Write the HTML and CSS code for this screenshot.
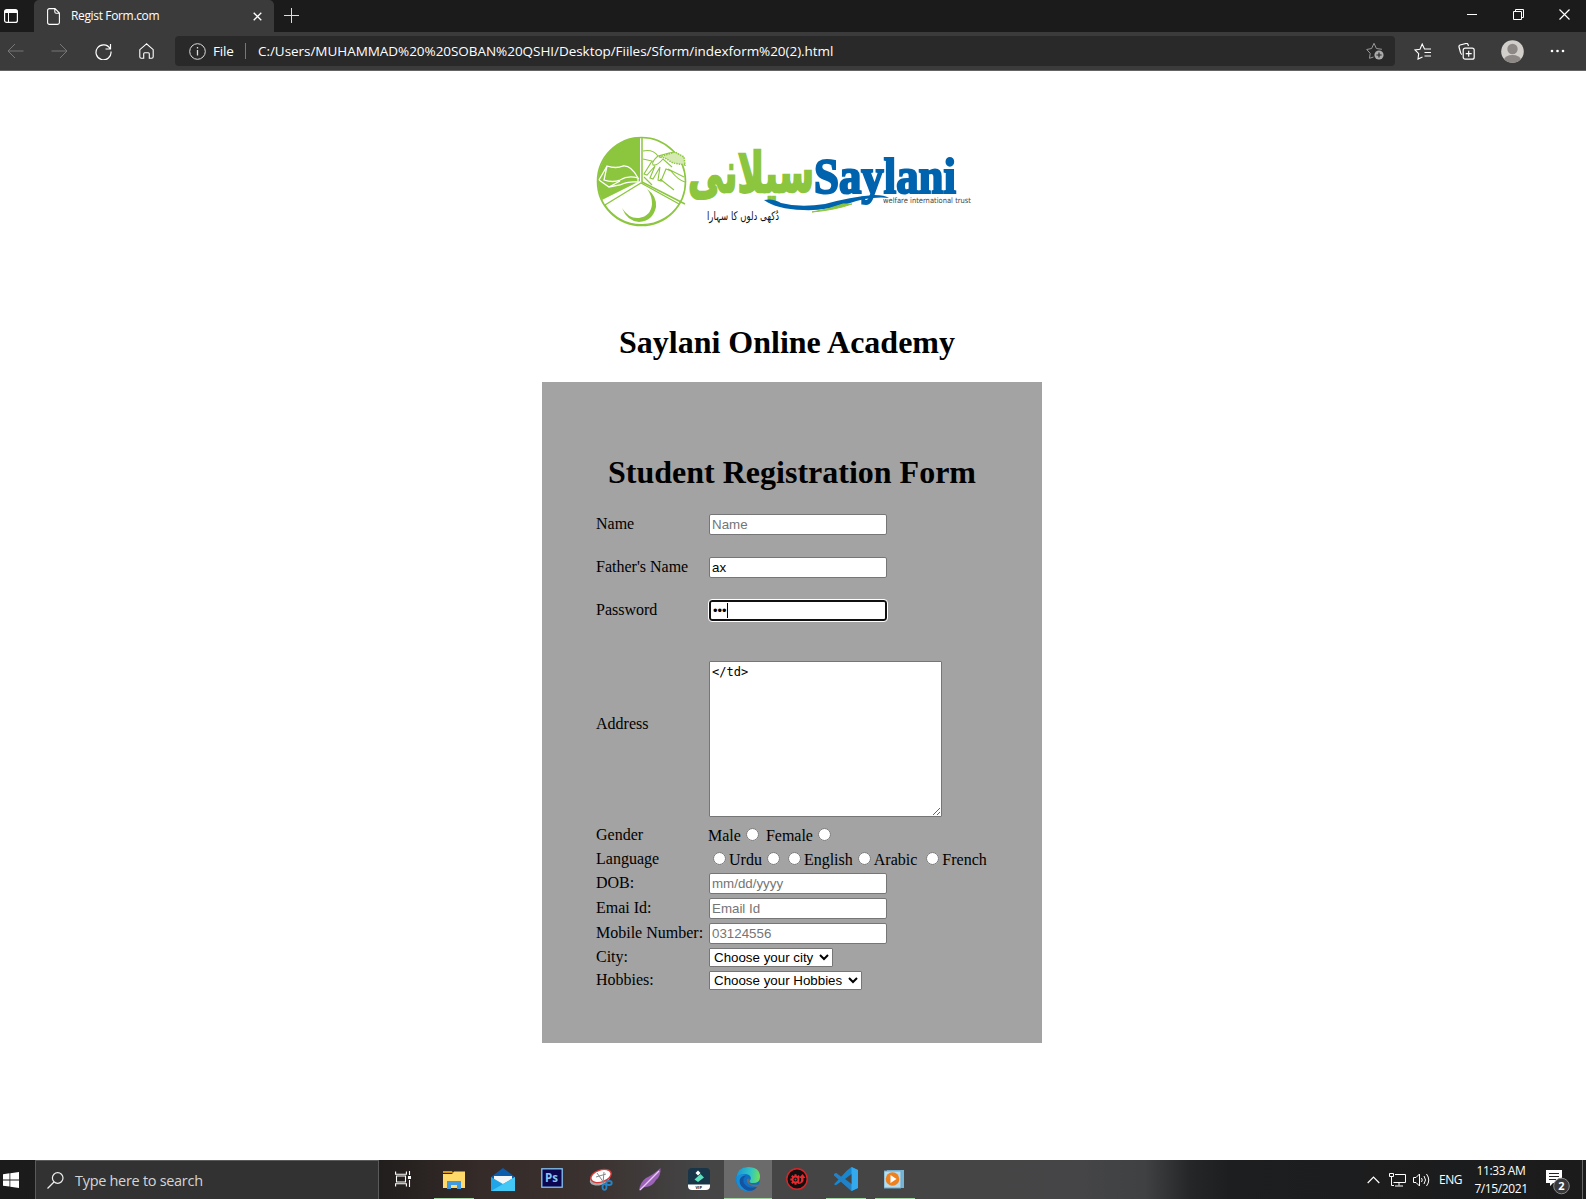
FILE: index.html
```html
<!DOCTYPE html>
<html lang="en">
<head>
<meta charset="utf-8">
<title>Regist Form.com</title>
<link rel="stylesheet" href="styles.css">
</head>
<body>
<div class="screen">
  <header class="tabs">
    <div class="tab-menu"><svg width="14" height="14" viewBox="0 0 14 14" fill="none" stroke="#fff"><rect x=".6" y=".6" width="12.8" height="12.8" rx="2" stroke-width="1.2"/><path d="M1 2.5h12" stroke-width="3"/><path d="M4.5 4v9"/></svg></div>
    <div class="tab">
      <svg width="13" height="17" viewBox="0 0 13 17" fill="none" stroke="#fff" stroke-width="1.1"><path d="M2.500 .6H8l4.400 4.400v9.500q0 1.900-1.900 1.900h-8Q.6 16.400.6 14.500v-12Q.6.6 2.500.6zM7.800.8v3q0 1.400 1.400 1.400h3"/></svg>
      <span class="tab-title">Regist Form.com</span>
      <svg width="9" height="9" viewBox="0 0 9 9" stroke="#fff" stroke-width="1.3"><path d="M.7.7l7.600 7.600M8.300.7L.7 8.300"/></svg>
    </div>
    <svg class="tab-add" width="15" height="15" viewBox="0 0 15 15" stroke="#ddd"><path d="M7.500 0v15M0 7.500h15"/></svg>
    <div class="window-buttons">
      <svg width="11" height="11" viewBox="0 0 11 11" stroke="#fff"><path d="M0 5.500h10"/></svg>
      <svg width="11" height="11" viewBox="0 0 11 11" fill="none" stroke="#fff"><path d="M.5 2.500h8v8h-8zM2.500 2.500v-2h8v8h-2"/></svg>
      <svg width="11" height="11" viewBox="0 0 11 11" stroke="#fff" stroke-width="1.2"><path d="M.5.5l10 10M10.500.5l-10 10"/></svg>
    </div>
  </header>
  <nav class="toolbar">
    <div class="nav-buttons">
      <svg width="17" height="16" viewBox="0 0 17 16" fill="none" stroke="#777"><path d="M16.500 8H1M8 1L1 8l7 7"/></svg>
      <svg width="17" height="16" viewBox="0 0 17 16" fill="none" stroke="#777"><path d="M.5 8H16M9 1l7 7-7 7"/></svg>
      <svg width="17" height="17" viewBox="0 0 17 17" fill="none" stroke="#fff" stroke-width="1.2"><path d="M15 5.500A7.500 7.500 0 1 0 16 8.500M15.500 1v5h-5"/></svg>
      <svg width="15" height="16" viewBox="0 0 15 16" fill="none" stroke="#fff" stroke-width="1.1"><path d="M7.500.8L.8 6.700v7q0 1.500 1.500 1.500h2.400v-4.400q0-1 1-1h3.600q1 0 1 1v4.400h2.400q1.500 0 1.500-1.500v-7z"/></svg>
    </div>
    <div class="address">
      <svg width="17" height="17" viewBox="0 0 17 17" fill="none" stroke="#ddd"><circle cx="8.500" cy="8.500" r="7.800"/><path d="M8.500 7v5.500M8.500 4v1.500" stroke-width="1.300"/></svg>
      <span class="scheme">File</span>
      <span class="url">C:/Users/MUHAMMAD%20%20SOBAN%20QSHI/Desktop/Fiiles/Sform/indexform%20(2).html</span>
      <svg class="star-add" width="18" height="18" viewBox="0 0 18 18" fill="none" stroke="#999"><path d="M7.500 15L3.500 16.300l.7-5L.7 7.500 5.600 6.500 8 1.300l2.400 5.200 5.500.8"/><circle cx="13" cy="13" r="4.600" fill="#aaa" stroke="none"/><path d="M13 10.400v5.200M10.400 13h5.200" stroke="#292929" stroke-width="1.200"/></svg>
    </div>
    <div class="tools">
      <svg width="18" height="17" viewBox="0 0 18 17" fill="none" stroke="#fff" stroke-width="1.100"><path d="M8.500 14L4 16l.7-5.400L1 7l5-.8L8.200 1l2.300 5h6.500M10.500 9.500H17M10.500 13H17"/></svg>
      <svg width="17" height="17" viewBox="0 0 17 17" fill="none" stroke="#fff" stroke-width="1.200"><path d="M4 11.500Q2.800 11 2.500 9.500L1 4Q.7 2.500 2 2l6-1.500q1.500-.3 2 1l.5 1.500"/><rect x="5.200" y="5.200" width="11" height="11" rx="2"/><path d="M10.700 7.700v6M7.700 10.700h6"/></svg>
      <svg width="23" height="23" viewBox="0 0 23 23"><defs><clipPath id="avatar"><circle cx="11.500" cy="11.500" r="11.300"/></clipPath></defs><g clip-path="url(#avatar)"><path fill="#d2cfcb" d="M0 0h23v23H0z"/><circle cx="11.500" cy="9" r="5.200" fill="#8d8885"/><ellipse cx="11.500" cy="20" rx="8.500" ry="5" fill="#8d8885"/></g></svg>
      <svg width="15" height="4" viewBox="0 0 15 4" fill="#fff"><circle cx="2" cy="2" r="1.300"/><circle cx="7.500" cy="2" r="1.300"/><circle cx="13" cy="2" r="1.300"/></svg>
    </div>
  </nav>

  <main class="page">
    <svg class="logo" width="400" height="110" viewBox="0 0 400 110">
      <circle cx="56.500" cy="56.500" r="44" fill="#fff" stroke="#8cc63f" stroke-width="1.600"/>
      <path d="M55 12A44.500 44.500 0 0 0 17 75L55 56z" fill="#8cc63f"/>
      <path d="M20 80A44 44 0 0 0 94 79L56 58z" fill="#fff" stroke="#8cc63f" stroke-width="1.200"/>
      <path d="M57 12v45l43 22" fill="none" stroke="#8cc63f" stroke-width="1.500"/>
      <path d="M62 64Q72 71 71 82 68 96 54 97 42 96 37 83 44 94 54 93 66 91 67 79 67 70 62 64z" fill="#8cc63f"/>
      <path d="M22 41q9 3 16 0 8-1 15 12-10-3-18 2-7 3-16 0zM14 55l8-14M14 55l10 7 11-2q8-4 18-3v-4M24 62l11-6" fill="none" stroke="#fff" stroke-width="1.300"/>
      <path d="M58 26q10-2 15 5l11-3q9-2 14 6M58 34l9 2-8 13 3 1 8-9-5 12 3 1 7-12-2 13 3 1 5-12 5 2q7 9 14 11M73 31q-7 6-5 9 4 1 10-6l9 8M59 52l8 8M75 54l14 11M83 44l16 8" fill="none" stroke="#8cc63f" stroke-width="1.100"/>
      <path d="M74 32l16-5 9 5 1 8-12-2-8-5z" fill="#d5e9b2" stroke="#8cc63f" stroke-width="1.500" stroke-dasharray="1.500 1"/>
      <g transform="translate(0 67) scale(1 1.150)"><text class="logo-urdu" x="229" y="0" textLength="126" lengthAdjust="spacingAndGlyphs" direction="rtl">سیلانی</text></g>
      <path d="M179 75Q188 73 196 78 215 83 240 79 265 72 289 70 300 70 304 73 285 71 262 79 240 86 218 85 191 84 179 75z" fill="#0063ae"/>
      <path d="M227 87Q250 85 267 79H258Q245 84 227 87z" fill="#8cc63f" stroke="#8cc63f"/>
      <g transform="translate(0 68) scale(1 1.120)"><text class="logo-name" x="229" y="0" textLength="142" lengthAdjust="spacingAndGlyphs">Saylani</text></g>
      <text class="logo-trust" x="298" y="78" textLength="88" lengthAdjust="spacingAndGlyphs">welfare international trust</text>
      <text class="logo-tagline" x="194" y="95" textLength="72" lengthAdjust="spacingAndGlyphs" direction="rtl">دُکھی دلوں کا سہارا</text>
    </svg>
    <h1 class="academy">Saylani Online Academy</h1>
    <form class="form">
      <h1 class="form-title">Student Registration Form</h1>
      <div class="row tall"><label>Name</label><input class="field" type="text" placeholder="Name"></div>
      <div class="row tall"><label>Father's Name</label><input class="field" type="text" value="ax"></div>
      <div class="row tall"><label>Password</label><div class="field focused"><span>•••</span><i class="caret"></i></div></div>
      <div class="row area-row"><label>Address</label><textarea class="area">&lt;/td&gt;</textarea></div>
      <div class="row choice"><label>Gender</label><div class="radios">Male<input type="radio"> Female<input type="radio"></div></div>
      <div class="row choice"><label>Language</label><div class="radios"><input type="radio">Urdu<input type="radio"><input type="radio">English<input type="radio">Arabic <input type="radio">French</div></div>
      <div class="row"><label>DOB:</label><input class="field" type="text" placeholder="mm/dd/yyyy"></div>
      <div class="row"><label>Emai Id:</label><input class="field" type="text" placeholder="Email Id"></div>
      <div class="row"><label>Mobile Number:</label><input class="field" type="text" placeholder="03124556"></div>
      <div class="row short"><label>City:</label><select class="select city"><option>Choose your city</option></select></div>
      <div class="row short"><label>Hobbies:</label><select class="select hobbies"><option>Choose your Hobbies</option></select></div>
    </form>
  </main>

  <footer class="taskbar">
    <div class="start"><svg width="16" height="16" viewBox="0 0 16 16" fill="#fff"><path d="M0 2.200l6.500-.9v6.200H0zM7.300 1.200L16 0v7.500H7.300zM0 8.400h6.500v6.200L0 13.800zM7.300 8.400H16V16l-8.700-1.200z"/></svg></div>
    <div class="search"><svg width="17" height="17" viewBox="0 0 17 17" fill="none" stroke="#eee" stroke-width="1.200"><circle cx="10.700" cy="6" r="5.300"/><path d="M7 10L.5 16.500"/></svg><span>Type here to search</span></div>
    <div class="apps">
      <div class="app task-view"><svg width="17" height="16" viewBox="0 0 17 16" fill="none" stroke="#fff" stroke-width="1.100"><path d="M.6.500v2.700h10.800V.500M1.500 5h9v6h-9zM.6 15.500v-2.700h10.800v2.700M14.500 0v4M14.500 9v7"/><path fill="#fff" stroke="none" d="M13 5h3v3h-3z"/></svg></div>
      <div class="app open"><svg width="22" height="19" viewBox="0 0 22 19"><path fill="#d99a10" d="M0 1h9l1 2H0z"/><path fill="#ffda6b" d="M0 4h9l2-2.500h11V18H0z"/><path fill="#3f9ae0" d="M4 11h14v8h-4v-4H8v4H4z"/></svg></div>
      <div class="app"><svg width="24" height="23" viewBox="0 0 24 23"><path fill="#0b5cad" d="M0 9L12 0l12 9v5H0z"/><path fill="#f3f5f7" d="M3 8h18v5l-9 6-9-6z"/><path fill="#20a5e8" d="M0 9l12 7L24 9v14H0z"/><path fill="#43c7f4" d="M0 23L24 9v14z"/></svg></div>
      <div class="app"><svg class="ps" width="22" height="20" viewBox="0 0 22 20"><rect x=".8" y=".8" width="20.400" height="18.400" fill="#0c0650" stroke="#86c5f4" stroke-width="1.300"/><text class="ps-text" x="4" y="14">Ps</text></svg></div>
      <div class="app"><svg width="24" height="23" viewBox="0 0 24 23"><ellipse cx="11" cy="11" rx="10.500" ry="6" fill="#aaa" transform="rotate(-18 11 11)"/><ellipse cx="12" cy="8" rx="10.500" ry="6" fill="#fff" stroke="#d83a3a" stroke-width="1.400" transform="rotate(-18 12 8)"/><path d="M8 5l7 10M15 4l-1 11M7 9l10-3" stroke="#888" stroke-width="1"/><g fill="none" stroke="#2584c6" stroke-width="1.800"><ellipse cx="15.500" cy="19" rx="2" ry="2.800"/><ellipse cx="20" cy="15" rx="2.800" ry="2"/></g></svg></div>
      <div class="app"><svg width="22" height="23" viewBox="0 0 22 23"><path d="M0 23Q1 14 7 10 14 7 21.500 0 22 8 17 12q-3 6-10 7-4 0-7 4z" fill="#9b62b8"/><path d="M1 22Q9 14 20 3" fill="none" stroke="#e8ccf4" stroke-width="1.300"/></svg></div>
      <div class="app"><svg width="22" height="22" viewBox="0 0 22 22"><rect width="22" height="22" rx="4" fill="#183648"/><path d="M0 16.500h22V18q0 4-4 4H4q-4 0-4-4z" fill="#fff"/><path d="M7.500 5L10 2.500 12.500 5 10 7.500z" fill="#fff"/><path d="M6.500 11.500L12.500 6 16 9.500 10 14z" fill="#5de0bd"/><text class="vip-text" x="7.500" y="20.500">VIP</text></svg></div>
      <div class="app active"><svg width="24" height="24" viewBox="0 0 24 24"><defs><linearGradient id="edgeTop" x1="0" y1=".4" x2="1" y2=".5"><stop stop-color="#1894d5"/><stop offset=".6" stop-color="#30c5c4"/><stop offset="1" stop-color="#70e05a"/></linearGradient></defs><circle cx="12" cy="12" r="12" fill="#0e6fc6"/><path d="M0 11Q1.500 0 12 0q12 0 12 10 0 6-7 6-4 0-3.500-2 3-3-.5-6Q7 5 0 11z" fill="url(#edgeTop)"/><path d="M1 9q5-3 9-1-4 3-3 8 2 6 8 7.500Q6 26 1.500 18-1 13 1 9z" fill="#168ed8"/><path d="M10 8.500q-4 3-2 8 4 6 13 3.500Q17 25 11 23.500 2 19 4 12q2-4 6-3.500z" fill="#1353a0"/><path d="M13 14q-1 5 9.500 3.500l2 .5-2 2q-7 0-10-3t-1-5.500q4 0 1.500 2.500z" fill="#6b6b6b"/></svg></div>
      <div class="app"><svg width="22" height="22" viewBox="0 0 22 22"><circle cx="11" cy="11" r="10.200" fill="#101010" stroke="#dc2328" stroke-width="1.400"/><circle cx="9.500" cy="11.500" r="3" fill="none" stroke="#e8282d" stroke-width="1.800"/><path d="M9.500 6.300v2M9.500 14.700v2M4.300 11.500h2M5.800 7.800l1.500 1.500M5.800 15.200l1.500-1.500M13.200 15.200l-1.500-1.500M13.200 7.800l-1.500 1.500" stroke="#e8282d" stroke-width="2"/><circle cx="9.500" cy="11.500" r="1" fill="#e8282d"/><path d="M11 16q5-1 4-6h-2l3.500-4 3 4h-2q1 6-6.500 6z" fill="#e8282d"/></svg></div>
      <div class="app open"><svg width="24" height="24" viewBox="0 0 24 24"><path d="M17.500 0L24 3v18l-6.500 3L7 14.500l-5 3.800-2-1.100L13 3.500z" fill="#1788cf"/><path d="M0 7l2-1.200 15.500 12V24L0 8.500z" fill="#2381c6"/><path d="M17.500 0L24 3v18l-6.500 3z" fill="#35a9ee"/><path d="M17.500 7v10L11 12z" fill="#464648"/></svg></div>
      <div class="app open"><svg class="media" width="21" height="20" viewBox="0 0 21 20"><path d="M3 1h17v18H3z" fill="#76b4d5"/><path d="M0 2h17v17H0z" fill="#b6dcef" stroke="#6da9c8"/><circle cx="8.500" cy="10" r="6.800" fill="#ee811d"/><path d="M6.500 6l6 4-6 4z" fill="#fff"/></svg></div>
    </div>
    <div class="tray">
      <svg class="chevron" width="13" height="8" viewBox="0 0 13 8" fill="none" stroke="#fff" stroke-width="1.200"><path d="M.7 7l5.800-5.800L12.300 7"/></svg>
      <svg class="network" width="17" height="14" viewBox="0 0 17 14" fill="none" stroke="#fff"><path d="M6 1.500h10.500v8h-12M10 9.500v3M6 13h8M.5.5h4v3h-4zM2.500 3.500v9H5"/></svg>
      <svg class="sound" width="17" height="14" viewBox="0 0 17 14" fill="none" stroke="#fff"><path d="M.5 4.500H3L6.500 1v12L3 9.500H.5zM8.500 5q1.500 2 0 4M11 3q3 4 0 8M13.500 1q4.500 6 0 12"/></svg>
      <span class="lang">ENG</span>
      <div class="clock"><span>11:33 AM</span><span>7/15/2021</span></div>
      <svg class="notice" width="26" height="26" viewBox="0 0 26 26"><path d="M0 0h16v13H7l-3 3v-3H0z" fill="#fff"/><path d="M3 3.500h10M3 6.500h10M3 9.500h7" stroke="#222"/><circle cx="15.500" cy="16" r="7.800" fill="#39393b" stroke="#888"/><text class="badge-text" x="12.300" y="20">2</text></svg>
      <i class="peek"></i>
    </div>
  </footer>
</div>
</body>
</html>
```
FILE: styles.css
```css
* { box-sizing: border-box; }
body { margin: 0; background: #fff; color: #000; font-family: "Liberation Serif", serif; font-size: 16px; }
svg { display: block; flex: none; }
.screen { width: 1586px; height: 1199px; display: flex; flex-direction: column; overflow: hidden; }

.tabs { height: 32px; flex: none; display: flex; background: #1b1b1b; color: #fff; font-family: "Open Sans", sans-serif; }
.tab-menu { width: 34px; padding: 9px 0 0 4px; }
.tab { width: 240px; height: 32px; padding: 0 12px 0 13px; display: flex; align-items: center; background: #3b3b3b; border-radius: 5px 5px 0 0; }
.tab-title { flex: 1; margin: -2px 0 0 11px; font-size: 12px; letter-spacing: -.35px; }
.tab-add { margin: 8px 0 0 10px; }
.window-buttons { margin-left: auto; padding: 9px 16px 0 0; display: flex; gap: 35px; }

.toolbar { height: 39px; flex: none; display: flex; background: #3b3b3b; border-bottom: 1px solid #656365; font-family: "Open Sans", sans-serif; color: #fff; }
.nav-buttons { width: 175px; padding: 0 0 0 7px; height: 38px; display: flex; align-items: center; gap: 27px; }
.address { width: 1220px; height: 30px; margin-top: 4px; padding: 0 11px 0 14px; display: flex; align-items: center; background: #292929; border-radius: 4px; font-size: 13.500px; }
.scheme { margin-left: 7px; width: 33px; line-height: 16px; border-right: 1px solid #777; letter-spacing: -.2px; }
.url { margin-left: 12px; letter-spacing: -.045px; white-space: nowrap; }
.star-add { margin-left: auto; }
.tools { height: 38px; margin-left: 19px; display: flex; align-items: center; gap: 26px; }

.page { flex: 1; display: flex; flex-direction: column; align-items: center; }
.logo { margin: 54px 16px 0 0; }
.logo-urdu { font: bold 48px "DejaVu Sans", sans-serif; fill: #8cc63f; stroke: #8cc63f; stroke-width: 2px; }
.logo-name { font: bold 46px "Liberation Serif", serif; fill: #0063ae; stroke: #0063ae; stroke-width: 2px; }
.logo-trust { font: 7.500px "DejaVu Sans", sans-serif; fill: #444; }
.logo-tagline { font: 12px "DejaVu Sans", sans-serif; fill: #111; }
.academy { margin: 89px 12px 0 0; height: 58px; font-size: 32px; line-height: 37px; }
.form { width: 500px; height: 661px; margin-right: 2px; padding: 71px 54px 0; background: #a3a3a3; }
.form-title { margin: 0; height: 50px; font-size: 32px; line-height: 38px; text-align: center; white-space: nowrap; }
.row { height: 25px; display: grid; grid-template-columns: 112px 1fr; align-items: center; white-space: nowrap; }
.row label { margin-top: -1px; }
.tall { height: 43px; }
.area-row { height: 191px; }
.area-row label { margin-top: -8px; }
.choice { height: 24px; }
.choice label { margin-top: 0; }
.short { height: 23px; }
.field { width: 178px; height: 21px; padding: 1px 2px; border: 1px solid #767676; border-radius: 2px; background: #fff; margin-left: 1px; font: 13.333px "Liberation Sans", sans-serif; }
.field::placeholder { color: #757575; }
.focused { display: flex; align-items: center; border: 2px solid #101010; border-radius: 3px; outline: 1px solid #fff; font-size: 13px; }
.caret { width: 1px; height: 15px; background: #000; }
.area { width: 233px; height: 156px; margin: 22px 0 0 1px; padding: 3px 2px; border: 1px solid #767676; border-radius: 1px; font: 12px "DejaVu Sans Mono", monospace; }
.radios input { width: 13px; height: 13px; margin: 3px 3px 0 5px; }
.select { height: 19px; margin-left: 1px; border: 1px solid #767676; border-radius: 1px; background: #fff; color: #000; padding: 0; font: 13.333px "Liberation Sans", sans-serif; }
.city { width: 124px; }
.hobbies { width: 153px; }

.taskbar { height: 39px; flex: none; display: flex; background: linear-gradient(90deg, #1b1b1b 0, #211e1d 380px, #352b28 480px, #3b3331 600px, #454546 700px, #454547 1080px, #3f4143 1145px, #252628 1190px, #1d1e1f 1230px, #1b1b1c); color: #fff; font-family: "Open Sans", sans-serif; }
.start { width: 35px; padding: 12px 0 0 3px; }
.search { width: 344px; display: flex; align-items: center; padding-left: 11px; background: #323232; border: 1px solid #5a5a5a; border-bottom: 0; font-size: 14.500px; color: #d5d5d5; }
.search span { margin-left: 11px; letter-spacing: -.3px; }
.apps { display: flex; gap: 1px; }
.app { width: 48px; display: flex; align-items: center; justify-content: center; border-bottom: 1px solid transparent; }
.task-view { margin-right: 2px; }
.open { background: linear-gradient(#9bd49b, #9bd49b) center bottom / 40px 1px no-repeat; background-origin: border-box; background-clip: border-box; }
.active { background: #6b6b6b; border-bottom-color: #9bd49b; }
.ps { margin-bottom: 2px; }
.media { margin-right: 2px; }
.ps-text { font: bold 11.500px "Open Sans", sans-serif; fill: #86c5f4; }
.vip-text { font: bold 4px "Open Sans", sans-serif; fill: #111; }
.tray { margin-left: auto; width: 219px; display: flex; align-items: center; }
.network { margin-left: 9px; }
.sound { margin-left: 7px; }
.lang { margin-left: 9px; width: 24px; font-size: 12px; letter-spacing: -.5px; }
.clock { width: 76px; display: flex; flex-direction: column; align-items: center; font-size: 12px; line-height: 18px; letter-spacing: -.4px; }
.notice { margin: 7px 0 0 7px; }
.badge-text { font: bold 11px "Open Sans", sans-serif; fill: #fff; }
.peek { width: 1px; height: 39px; margin-left: auto; margin-right: 3px; background: #666; }
```
